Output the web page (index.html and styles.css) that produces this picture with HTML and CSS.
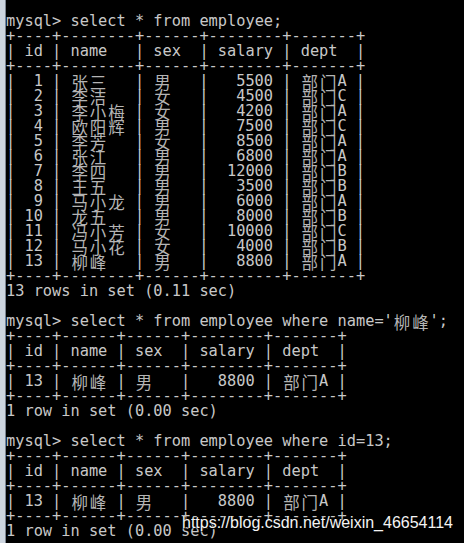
FILE: index.html
```html
<!DOCTYPE html>
<html>
<head>
<meta charset="utf-8">
<link rel="stylesheet" href="styles.css">
</head>
<body>
<div class="window">
  <div class="frame"></div>
  <div class="term">
<div class="ln">mysql&gt; select * from employee;</div>
<div class="ln">+----+--------+------+--------+-------+</div>
<div class="ln">| id | name   | sex  | salary | dept  |</div>
<div class="ln">+----+--------+------+--------+-------+</div>
<div class="ln">|  1 | <span class="w">张</span><span class="w">三</span>   | <span class="w">男</span>   |   5500 | <span class="w">部</span><span class="w">门</span>A |</div>
<div class="ln">|  2 | <span class="w">李</span><span class="w">洁</span>   | <span class="w">女</span>   |   4500 | <span class="w">部</span><span class="w">门</span>C |</div>
<div class="ln">|  3 | <span class="w">李</span><span class="w">小</span><span class="w">梅</span> | <span class="w">女</span>   |   4200 | <span class="w">部</span><span class="w">门</span>A |</div>
<div class="ln">|  4 | <span class="w">欧</span><span class="w">阳</span><span class="w">辉</span> | <span class="w">男</span>   |   7500 | <span class="w">部</span><span class="w">门</span>C |</div>
<div class="ln">|  5 | <span class="w">李</span><span class="w">芳</span>   | <span class="w">女</span>   |   8500 | <span class="w">部</span><span class="w">门</span>A |</div>
<div class="ln">|  6 | <span class="w">张</span><span class="w">江</span>   | <span class="w">男</span>   |   6800 | <span class="w">部</span><span class="w">门</span>A |</div>
<div class="ln">|  7 | <span class="w">李</span><span class="w">四</span>   | <span class="w">男</span>   |  12000 | <span class="w">部</span><span class="w">门</span>B |</div>
<div class="ln">|  8 | <span class="w">王</span><span class="w">五</span>   | <span class="w">男</span>   |   3500 | <span class="w">部</span><span class="w">门</span>B |</div>
<div class="ln">|  9 | <span class="w">马</span><span class="w">小</span><span class="w">龙</span> | <span class="w">男</span>   |   6000 | <span class="w">部</span><span class="w">门</span>A |</div>
<div class="ln">| 10 | <span class="w">龙</span><span class="w">五</span>   | <span class="w">男</span>   |   8000 | <span class="w">部</span><span class="w">门</span>B |</div>
<div class="ln">| 11 | <span class="w">冯</span><span class="w">小</span><span class="w">芳</span> | <span class="w">女</span>   |  10000 | <span class="w">部</span><span class="w">门</span>C |</div>
<div class="ln">| 12 | <span class="w">马</span><span class="w">小</span><span class="w">花</span> | <span class="w">女</span>   |   4000 | <span class="w">部</span><span class="w">门</span>B |</div>
<div class="ln">| 13 | <span class="w">柳</span><span class="w">峰</span>   | <span class="w">男</span>   |   8800 | <span class="w">部</span><span class="w">门</span>A |</div>
<div class="ln">+----+--------+------+--------+-------+</div>
<div class="ln">13 rows in set (0.11 sec)</div>
<div class="ln"> </div>
<div class="ln">mysql&gt; select * from employee where name='<span class="w">柳</span><span class="w">峰</span>';</div>
<div class="ln">+----+------+------+--------+-------+</div>
<div class="ln">| id | name | sex  | salary | dept  |</div>
<div class="ln">+----+------+------+--------+-------+</div>
<div class="ln">| 13 | <span class="w">柳</span><span class="w">峰</span> | <span class="w">男</span>   |   8800 | <span class="w">部</span><span class="w">门</span>A |</div>
<div class="ln">+----+------+------+--------+-------+</div>
<div class="ln">1 row in set (0.00 sec)</div>
<div class="ln"> </div>
<div class="ln">mysql&gt; select * from employee where id=13;</div>
<div class="ln">+----+------+------+--------+-------+</div>
<div class="ln">| id | name | sex  | salary | dept  |</div>
<div class="ln">+----+------+------+--------+-------+</div>
<div class="ln">| 13 | <span class="w">柳</span><span class="w">峰</span> | <span class="w">男</span>   |   8800 | <span class="w">部</span><span class="w">门</span>A |</div>
<div class="ln">+----+------+------+--------+-------+</div>
<div class="ln">1 row in set (0.00 sec)</div>
  </div>
  <div class="watermark">https://blog.csdn.net/weixin_46654114</div>
</div>
</body>
</html>
```
FILE: styles.css
```css
html, body {
  margin: 0;
  padding: 0;
  background: #000;
}
.window {
  position: relative;
  width: 464px;
  height: 543px;
  overflow: hidden;
  display: flex;
  background: #000;
}
.frame {
  width: 5px;
  flex: none;
  background: #cdd5df;
  border-right: 1px solid #7d8590;
}
.term {
  flex: 1;
  padding-top: 14px;
  font-family: "DejaVu Sans Mono", "Noto Sans CJK SC", monospace;
  font-size: 15.3px;
  color: #c8c8c8;
}
.ln {
  height: 15px;
  line-height: 15px;
  white-space: pre;
}
.w {
  display: inline-block;
  width: 18.4px;
  text-align: center;
  font-family: "Noto Sans CJK SC", sans-serif;
  font-size: 16.5px;
  line-height: 17px;
  height: 15px;
  vertical-align: top;
  color: #b4b4b4;
}
.watermark {
  position: absolute;
  left: 182px;
  top: 514px;
  font-family: "Liberation Sans", Arial, sans-serif;
  font-size: 16px;
  color: #f4f4f4;
  text-shadow: 0 0 2px #000, 1px 1px 1px #000;
  white-space: nowrap;
}
```
